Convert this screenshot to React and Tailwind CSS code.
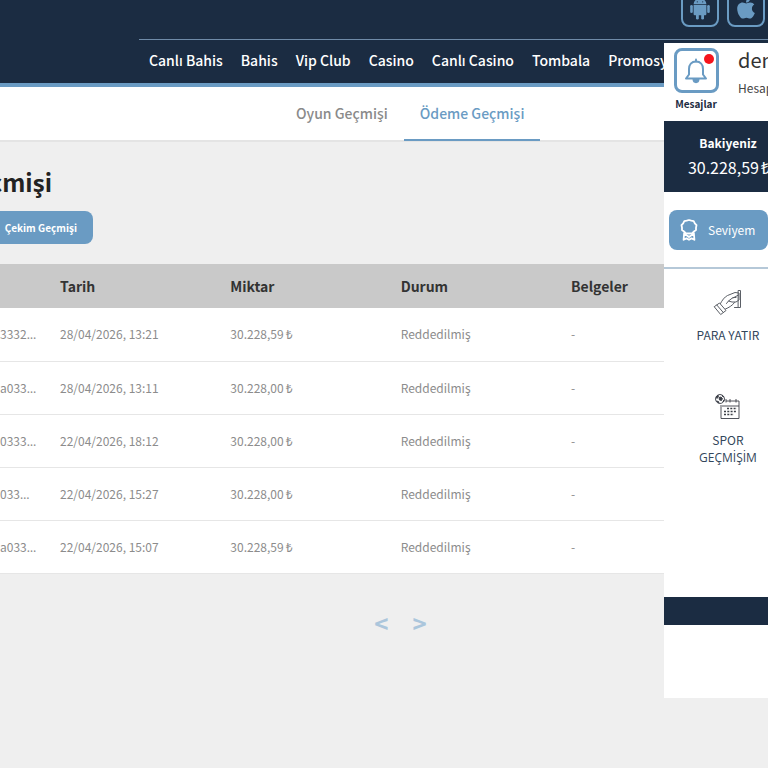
import React from "react";
import { FaApple } from "react-icons/fa";

const navItems = [
  "Canlı Bahis",
  "Bahis",
  "Vip Club",
  "Casino",
  "Canlı Casino",
  "Tombala",
  "Promosyonlar",
];

const payments = [
  { id: "3332", date: "28/04/2026, 13:21", amount: "30.228,59" },
  { id: "a033", date: "28/04/2026, 13:11", amount: "30.228,00" },
  { id: "0333", date: "22/04/2026, 18:12", amount: "30.228,00" },
  { id: "033", date: "22/04/2026, 15:27", amount: "30.228,00" },
  { id: "a033", date: "22/04/2026, 15:07", amount: "30.228,59" },
];

const AndroidIcon = () => (
  <svg className="w-[22px] h-6" viewBox="0 0 22 24" fill="currentColor">
    <path d="M4.600 8.200a6.400 5.800 0 0 1 12.800 0z" />
    <path d="M7 1.200 8.600 4M15 1.200 13.400 4" stroke="currentColor" />
    <path d="M4.600 9h12.800v9a1.200 1.200 0 0 1-1.200 1.200H5.800A1.200 1.200 0 0 1 4.600 18z" />
    <rect x="1.200" y="9" width="2.600" height="8" rx="1.300" />
    <rect x="18.200" y="9" width="2.600" height="8" rx="1.300" />
    <rect x="7" y="17" width="2.800" height="6.600" rx="1.400" />
    <rect x="12.200" y="17" width="2.800" height="6.600" rx="1.400" />
    <circle cx="8.300" cy="5.800" r="0.600" fill="#1b2c42" />
    <circle cx="13.700" cy="5.800" r="0.600" fill="#1b2c42" />
  </svg>
);

const BellIcon = () => (
  <svg
    className="w-6 h-[26px]"
    viewBox="0 0 24 26"
    fill="none"
    stroke="currentColor"
    strokeWidth="2"
    strokeLinejoin="round"
    strokeLinecap="round"
  >
    <path d="M12 3.500c-4.500 0-7 3.200-7 7.500v5.500L2 20.500h20l-3-4V11c0-4.300-2.500-7.500-7-7.500z" />
    <path d="M12 1.500v2" />
    <path d="M9.500 21.500c.2 3.500 4.800 3.500 5 0z" fill="currentColor" />
  </svg>
);

const AwardIcon = () => (
  <svg
    className="w-5 h-6 shrink-0"
    viewBox="0 0 20 24"
    fill="none"
    stroke="currentColor"
    strokeWidth="1.8"
    strokeLinejoin="round"
  >
    <path d="M10 2 12.300 2.700 14.700 3.200 15.800 5.400 17.500 7.200 17 9.600 17 12 15 13.400 13.400 15.200 10 15.500 6.600 15.200 5 13.400 3 12 3 9.600 2.500 7.200 4.200 5.400 5.300 3.200 7.700 2.700z" />
    <path d="M5.200 14.500 4.600 21.800 7.500 20.400 10 21.800 12.500 20.400 15.400 21.800 14.800 14.500M6 16l4 3 4-3" />
  </svg>
);

const HandCardIcon = () => (
  <svg
    className="w-8 h-7"
    viewBox="0 0 32 28"
    fill="none"
    stroke="currentColor"
    strokeWidth="1"
    strokeLinejoin="round"
    strokeLinecap="round"
  >
    <path d="m2.500 18.500 5-3.500 6.500 7.500-5 3.800z" />
    <path d="m4.800 17 6.500 7.500" />
    <path d="M8.500 15.500c1.500-3 4-6.500 7-8l7.500-3 4 .5v7l-3 2h-4l-3.500-1 4.500-3.500h3" />
    <path d="M22.500 14.500c-2 3-5.500 5-9 6.500M16.500 13l-2 2.500M21 10l5.500-3" />
    <path d="M26.500 2.500h2v17h-2zM26.500 19.500h-4" />
  </svg>
);

const SportHistoryIcon = () => (
  <svg
    className="w-8 h-7"
    viewBox="0 0 32 28"
    fill="none"
    stroke="currentColor"
    strokeWidth="0.9"
  >
    <circle cx="8" cy="6" r="4.500" />
    <path
      d="m7 4.500 2-.5 1.500 1.500L9.500 7.500 7.500 7zM4 4l2-2 .5 1.500L5 5.500zM4.500 8l2 .5.500 1.500zM10 2l2 2-1.500-.5zM11 8.500l1-1.500-.5 2z"
      fill="currentColor"
    />
    <path d="M14 8h13v17.500H9V12M10 13h17M14 6v3.500M18 6v3.500M24 6v3.500" />
    <path
      d="M15 15.500h10M12 18.500h13M12 21.500h10"
      strokeWidth="1.500"
      strokeDasharray="2 1.300"
    />
  </svg>
);

const App = () => {
  return (
    <div className="relative min-h-screen overflow-hidden bg-[#efefef] font-['Noto_Sans_CJK_SC','Noto_Sans',sans-serif] text-[#1c2b3f]">
      <header className="h-[87px] bg-[#1b2c42] border-b-4 border-[#6a9bc3]">
        <div className="h-[39px] flex justify-end items-start gap-2 pr-[3px] overflow-hidden">
          <button
            aria-label="Android"
            className="-mt-3 w-[38px] h-[39px] shrink-0 border-2 border-[#6a9bc3] rounded-lg text-[#6a9bc3] flex items-center justify-center"
          >
            <AndroidIcon />
          </button>
          <button
            aria-label="Apple"
            className="-mt-3 w-[38px] h-[39px] shrink-0 border-2 border-[#6a9bc3] rounded-lg text-[#6a9bc3] flex items-center justify-center"
          >
            <FaApple className="w-6 h-6" />
          </button>
        </div>
        <nav className="ml-[139px] h-10 border-t border-[#6f8ba8] flex items-center gap-[18px] pl-[10px] text-sm font-medium text-white whitespace-nowrap overflow-hidden">
          {navItems.map((item) => (
            <a key={item} href="#">
              {item}
            </a>
          ))}
        </nav>
      </header>

      <div className="h-[55px] bg-white border-b-2 border-[#e4e4e4] flex pl-[280px] text-sm font-medium whitespace-nowrap">
        <a
          href="#"
          className="h-[54px] px-4 flex items-center text-[#8a8a8a] border-b-2 border-transparent"
        >
          Oyun Geçmişi
        </a>
        <a
          href="#"
          className="h-[54px] px-4 flex items-center text-[#6a9bc3] border-b-2 border-[#6a9bc3]"
        >
          Ödeme Geçmişi
        </a>
      </div>

      <main className="mr-[104px]">
        <h1 className="w-[52px] h-10 mt-5 flex justify-end items-center overflow-hidden whitespace-nowrap text-2xl font-bold text-[#222]">
          Ödeme Geçmişi
        </h1>
        <button className="mt-[9px] w-[93px] h-[33px] pr-4 flex justify-end items-center rounded-r-lg bg-[#6a9bc3] text-white text-[10px] font-bold whitespace-nowrap">
          Çekim Geçmişi
        </button>

        <table className="mt-5 w-full table-fixed text-left whitespace-nowrap">
          <thead>
            <tr className="h-11 bg-[#c9c9c9] text-sm font-bold text-[#333]">
              <th className="w-[60px]"></th>
              <th>Tarih</th>
              <th>Miktar</th>
              <th>Durum</th>
              <th className="w-[93px]">Belgeler</th>
            </tr>
          </thead>
          <tbody>
            {payments.map((payment, index) => (
              <tr
                key={index}
                className="h-[53px] bg-white border-b border-[#e6e6e6] text-xs text-[#8c8c8c]"
              >
                <td>
                  {payment.id}
                  <span className="font-['Noto_Sans',sans-serif] leading-3">
                    …
                  </span>
                </td>
                <td>{payment.date}</td>
                <td>
                  {payment.amount}
                  <span className="ml-0.5">₺</span>
                </td>
                <td>Reddedilmiş</td>
                <td>-</td>
              </tr>
            ))}
          </tbody>
        </table>

        <div className="mt-[33px] ml-[137px] flex justify-center gap-6 text-2xl font-bold text-[#abc6dc]">
          <button>&lt;</button>
          <button>&gt;</button>
        </div>
      </main>

      {/* account panel sits over the page on the right */}
      <aside className="absolute top-[43px] right-0 w-[104px] overflow-hidden bg-white pb-[73px]">
        <div className="w-32">
          <div className="h-[78px] flex gap-4 pl-2 pt-[5px] whitespace-nowrap">
            <button className="w-12 shrink-0 flex flex-col items-center">
              <span className="relative w-[45px] h-[45px] border-[3px] border-[#6a9bc3] rounded-lg flex items-center justify-center text-[#6a9bc3]">
                <BellIcon />
                <span className="absolute top-[3px] right-[2px] w-[10px] h-[10px] rounded-full bg-[#f5141c]"></span>
              </span>
              <span className="mt-[3px] text-[10px] leading-4 font-bold">
                Mesajlar
              </span>
            </button>
            <div className="pl-[2px]">
              <p className="text-xl leading-6 text-[#333]">demo</p>
              <p className="mt-2 text-xs text-[#444]">Hesap</p>
            </div>
          </div>

          <div className="h-[71px] pb-1 bg-[#1b2c42] text-white flex flex-col items-center justify-center">
            <span className="text-xs leading-6 font-bold">Bakiyeniz</span>
            <span className="pl-0.5 text-base leading-6 whitespace-nowrap">
              30.228,59<span className="ml-[2px]">₺</span>
            </span>
          </div>

          <div className="h-[77px] pt-[18px] pl-[5px] border-b-2 border-[#b5c8d8]">
            <button className="w-[99px] h-10 rounded-lg bg-[#6a9bc3] text-white text-xs flex items-center gap-[9px] pl-[10px]">
              <AwardIcon />
              Seviyem
            </button>
          </div>

          <div className="h-[328px] pt-[19px] text-center text-xs leading-[18px] text-[#33475b]">
            <a href="#" className="h-[105px] flex flex-col items-center gap-2.5">
              <span className="text-[#5b5f66]">
                <HandCardIcon />
              </span>
              <span>PARA YATIR</span>
            </a>
            <a href="#" className="flex flex-col items-center gap-2.5">
              <span className="text-[#3c4048]">
                <SportHistoryIcon />
              </span>
              <span className="flex flex-col">
                <span>SPOR</span>
                <span className="font-['Open_Sans',sans-serif]">GEÇMİŞİM</span>
              </span>
            </a>
          </div>
          <div className="h-7 bg-[#1b2c42]"></div>
        </div>
      </aside>
    </div>
  );
};

export default App;
